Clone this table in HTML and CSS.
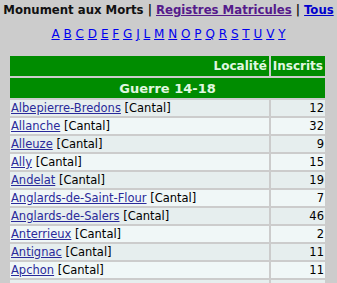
FILE: index.html
```html
<!DOCTYPE html>
<html>
<head>
<meta charset="utf-8">
<link rel="stylesheet" href="styles.css">
</head>
<body>
<div class="top">Monument aux Morts | <a class="visited" href="#">Registres Matricules</a> | <a class="tous" href="#">Tous</a></div>
<div class="letters">
<a href="#">A</a> <a href="#">B</a> <a href="#">C</a> <a href="#">D</a> <a href="#">E</a> <a href="#">F</a> <a href="#">G</a> <a href="#">J</a> <a href="#">L</a> <a href="#">M</a> <a href="#">N</a> <a href="#">O</a> <a href="#">P</a> <a href="#">Q</a> <a href="#">R</a> <a href="#">S</a> <a href="#">T</a> <a href="#">U</a> <a href="#">V</a> <a href="#">Y</a>
</div>
<table class="list">
<tr class="head"><th class="loc">Localité</th><th class="ins">Inscrits</th></tr>
<tr class="war"><th colspan="2">Guerre 14-18</th></tr>
<tr class="odd"><td><a href="#">Albepierre-Bredons</a> [Cantal]</td><td class="num">12</td></tr>
<tr class="even"><td><a href="#">Allanche</a> [Cantal]</td><td class="num">32</td></tr>
<tr class="odd"><td><a href="#">Alleuze</a> [Cantal]</td><td class="num">9</td></tr>
<tr class="even"><td><a href="#">Ally</a> [Cantal]</td><td class="num">15</td></tr>
<tr class="odd"><td><a href="#">Andelat</a> [Cantal]</td><td class="num">19</td></tr>
<tr class="even"><td><a href="#">Anglards-de-Saint-Flour</a> [Cantal]</td><td class="num">7</td></tr>
<tr class="odd"><td><a href="#">Anglards-de-Salers</a> [Cantal]</td><td class="num">46</td></tr>
<tr class="even"><td><a href="#">Anterrieux</a> [Cantal]</td><td class="num">2</td></tr>
<tr class="odd"><td><a href="#">Antignac</a> [Cantal]</td><td class="num">11</td></tr>
<tr class="even"><td><a href="#">Apchon</a> [Cantal]</td><td class="num">11</td></tr>
<tr class="odd"><td></td><td class="num"></td></tr>
</table>
</body>
</html>
```
FILE: styles.css
```css
html, body {
  margin: 0;
  padding: 0;
  background: #cccccc;
  font-family: "DejaVu Sans", Verdana, sans-serif;
  font-size: 11px;
  color: #000;
  overflow: hidden;
}
.top {
  font-family: "DejaVu Sans Condensed", "DejaVu Sans", sans-serif;
  font-weight: bold;
  font-size: 13px;
  text-align: center;
  white-space: nowrap;
  color: #111;
  padding-top: 2px;
  height: 22px;
}
.top a.visited { color: #551a8b; }
.top a.tous { color: #0000cc; }
.letters {
  text-align: center;
  font-size: 12px;
  height: 25px;
  padding-top: 3px;
}
.letters a { color: #0000ee; }
.list {
  margin-left: 8px;
  margin-top: 2px;
  border-spacing: 2px;
  width: 319px;
}
.list th {
  background: #008c00;
  color: #e0f8e0;
  font-weight: bold;
  font-size: 12px;
  height: 20px;
  padding: 0 2px;
  text-align: right;
}
.list th.ins { width: 48px; }
.list .war th {
  text-align: center;
  font-size: 13px;
}
.list td {
  height: 16px;
  padding: 0 1px;
  white-space: nowrap;
  font-size: 11.5px;
}
.list td a { color: #2a2a9a; }
.list tr.odd td { background: #e6eeee; }
.list tr.even td { background: #f0f7f7; }
.list td.num { text-align: right; }
```
